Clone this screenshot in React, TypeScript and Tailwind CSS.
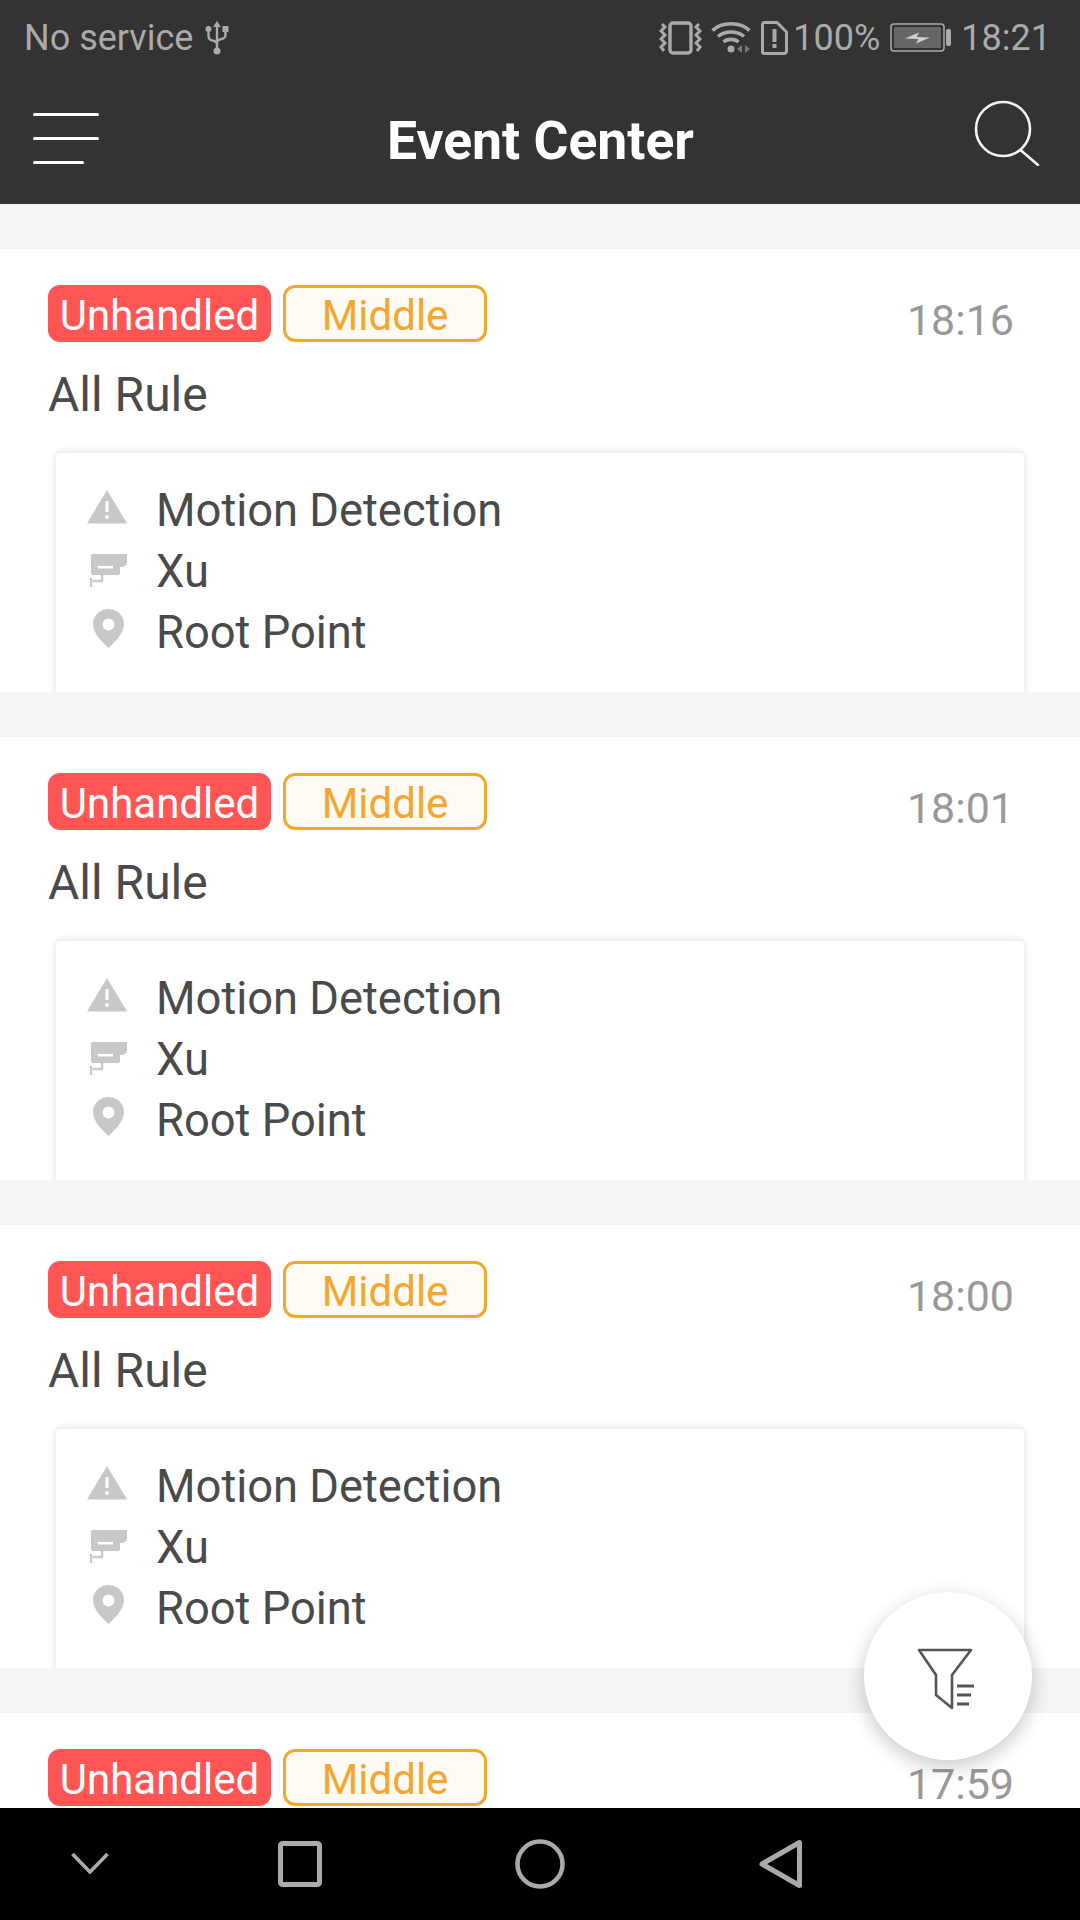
import React from "react";

const events = ["18:16", "18:01", "18:00", "17:59"];

function Vibrate() {
  return (
    <svg width="43" height="34" viewBox="0 0 43 34" fill="none" stroke="#aaaaaa">
      <rect x="11" y="2" width="21" height="30" rx="3" strokeWidth="3.400" />
      <path d="M3 3l3 3-4 4 4 4-4 4 4 4-4 4 3 4M40 3l-3 3 4 4-4 4 4 4-4 4 4 4-3 4" strokeWidth="3" />
    </svg>
  );
}

function Wifi() {
  return (
    <svg width="40" height="33" viewBox="0 0 40 33" fill="none" stroke="#aaaaaa" strokeWidth="3.600">
      <path d="M1.5 9.5C11 .5 29 .5 38.5 9.5M7 15.5c7-6 19-6 26 0M12.5 21c4-3.500 11-3.500 15 0" />
      <circle cx="20" cy="28" r="3.500" fill="#aaaaaa" stroke="none" />
      <path d="M31 24v8l-5-4zM34 24v8l5-4z" fill="#777777" stroke="none" />
    </svg>
  );
}

function SimAlert() {
  return (
    <svg width="27" height="34" viewBox="0 0 27 34" fill="none">
      <path d="M3.500 1.500H16l9.500 9.500v19a2.500 2.500 0 0 1-2.500 2.500H3.500A2 2 0 0 1 1.500 30.500v-27a2 2 0 0 1 2-2z" stroke="#aaaaaa" strokeWidth="3" />
      <rect x="11.500" y="8" width="4" height="13" fill="#aaaaaa" />
      <rect x="11.500" y="23" width="4" height="4" fill="#aaaaaa" />
    </svg>
  );
}

function Battery() {
  return (
    <svg width="61" height="29" viewBox="0 0 61 29" fill="none">
      <rect x="1" y="1" width="53" height="27" rx="3" stroke="#aaaaaa" strokeWidth="1.500" />
      <rect x="4" y="4" width="47" height="21" rx="1.500" fill="#666666" />
      <rect x="56" y="6" width="5" height="17" rx="2" fill="#aaaaaa" />
      <path d="M15 15.500L29 9.500l-2.500 4.500L40 14.500 26 20.500l2.500-4.500z" fill="#d0d0d0" />
    </svg>
  );
}

function Usb() {
  return (
    <svg width="24" height="34" viewBox="0 0 24 34" fill="none" stroke="#aaaaaa" strokeWidth="2.400">
      <path d="M12 5v24M3.500 9v6c0 3 1.500 4 4 4.500 3 .5 4.500 1.500 4.500 4M20.500 9v4.500c0 3-1.500 4-4 4.500-3 .5-4.500 1.500-4.500 4" />
      <path d="M12 0l-4 6h8z" fill="#aaaaaa" stroke="none" />
      <circle cx="12" cy="30" r="3.500" fill="#aaaaaa" stroke="none" />
      <circle cx="3.500" cy="8" r="3" fill="#aaaaaa" stroke="none" />
      <rect x="17.500" y="5" width="6" height="6" fill="#aaaaaa" stroke="none" />
    </svg>
  );
}

function StatusBar() {
  return (
    <div className="h-[66px] pl-[24px] pr-[29px] pt-[9px] flex items-center text-[36px] text-[#aaaaaa] leading-none">
      <span>No service</span>
      <span className="ml-[12px] flex"><Usb /></span>
      <span className="ml-auto flex"><Vibrate /></span>
      <span className="ml-[9px] flex"><Wifi /></span>
      <span className="ml-[10px] flex"><SimAlert /></span>
      <span className="ml-[5px]">100%</span>
      <span className="ml-[10px] flex"><Battery /></span>
      <span className="ml-[10px]">18:21</span>
    </div>
  );
}

function Toolbar() {
  return (
    <div className="h-[138px] pl-[33px] pr-[40px] pb-[4px] flex items-center justify-between">
      <div className="flex flex-col items-start gap-[21px] w-[66px] mt-[10px]">
        <div className="h-[3px] w-[66px] bg-white rounded-full" />
        <div className="h-[3px] w-[66px] bg-white rounded-full" />
        <div className="h-[3px] w-[51px] bg-white rounded-full" />
      </div>
      <div className="text-white font-bold text-[53.500px] leading-none mt-[16px] ml-[8px]">Event Center</div>
      <svg width="66" height="66" viewBox="0 0 66 66" fill="none" stroke="#f4f4f4" strokeWidth="2.600" strokeLinecap="round">
        <circle cx="29" cy="29" r="27" />
        <path d="M46.500 50L64 65" />
      </svg>
    </div>
  );
}

function AlertIcon() {
  return (
    <svg width="40" height="34" viewBox="0 0 40 34">
      <path d="M20 0L40 33.500H0z" fill="#c8c8c8" />
      <rect x="18.500" y="11" width="3" height="11" rx="1" fill="#ffffff" />
      <circle cx="20" cy="27" r="2" fill="#ffffff" />
    </svg>
  );
}

function CameraIcon() {
  return (
    <svg width="37" height="34" viewBox="0 0 37 34">
      <path d="M2 0h35v8a5 5 0 0 1-5 5h-2v6a2 2 0 0 1-2 2H3a2 2 0 0 1-2-2V1z" fill="#c8c8c8" />
      <rect x="8" y="12" width="15" height="2.500" fill="#ffffff" />
      <path d="M12 21v6H3M1 24v9" fill="none" stroke="#c8c8c8" strokeWidth="2.500" />
    </svg>
  );
}

function PinIcon() {
  return (
    <svg width="31" height="39" viewBox="0 0 31 39">
      <path fillRule="evenodd" d="M15.500 0C24 0 31 6.500 31 15c0 9-9 18-15.500 24C9 33 0 24 0 15 0 6.500 7 0 15.500 0zm0 9.500a6 6 0 1 0 0 12 6 6 0 0 0 0-12z" fill="#c8c8c8" />
    </svg>
  );
}

function Row({ icon, text, iconPad }: { icon: React.ReactNode; text: string; iconPad: string }) {
  return (
    <div className="h-[61px] flex items-center">
      <div className={`w-[69px] flex ${iconPad}`}>{icon}</div>
      <span>{text}</span>
    </div>
  );
}

function EventCard({ time }: { time: string }) {
  return (
    <div className="h-[443px] shrink-0 bg-white overflow-hidden pt-[36px]">
      <div className="pl-[48px] pr-[66px] flex items-start justify-between">
        <div className="flex gap-[12px]">
          <div className="h-[57px] w-[223px] rounded-[12px] bg-[#ff5555] text-white text-[42px] pt-[3px] flex items-center justify-center">Unhandled</div>
          <div className="h-[57px] w-[204px] rounded-[12px] border-[3px] border-[#f0a830] bg-[#fffaf4] text-[#f0a830] text-[42px] pt-[3px] flex items-center justify-center">Middle</div>
        </div>
        <div className="text-[43px] leading-none text-[#999999] mt-[14px]">{time}</div>
      </div>
      <div className="pl-[48px] mt-[26px] text-[48px] leading-[54px] text-[#4a4a4a]">All Rule</div>
      <div className="ml-[56px] mr-[56px] mt-[31px] h-[260px] rounded-[4px] bg-white shadow-[0_0_8px_rgba(0,0,0,0.14)] pt-[27px] pl-[31px] text-[45.300px] text-[#4a4a4a]">
        <Row icon={<AlertIcon />} text="Motion Detection" iconPad="pl-0 mb-[8px]" />
        <Row icon={<CameraIcon />} text="Xu" iconPad="pl-[3px] mb-[1px]" />
        <Row icon={<PinIcon />} text="Root Point" iconPad="pl-[6px] mb-[8px]" />
      </div>
    </div>
  );
}

function FilterIcon() {
  return (
    <svg width="60" height="62" viewBox="0 0 60 62" fill="none" stroke="#555555" strokeWidth="2.600" strokeLinejoin="round">
      <path d="M2 2h52L35 27v33L19 47V27z" />
      <path d="M40 38h17M40 47h14M40 56h12" strokeWidth="3" />
    </svg>
  );
}

function NavBar() {
  return (
    <div className="h-[112px] shrink-0 bg-black pl-[71px] flex items-center">
      <svg width="38" height="22" viewBox="0 0 38 22" fill="none" stroke="#aaaaaa" strokeWidth="3.600" className="mt-[-3px]">
        <path d="M1.500 2L19 20 36.500 2" />
      </svg>
      <svg width="44" height="46" viewBox="0 0 44 46" fill="none" stroke="#aaaaaa" strokeWidth="5" className="ml-[169px]">
        <rect x="2.500" y="2.500" width="39" height="41" rx="2" />
      </svg>
      <svg width="50" height="50" viewBox="0 0 50 50" fill="none" stroke="#aaaaaa" strokeWidth="4.500" className="ml-[193px]">
        <circle cx="25" cy="25" r="22.500" />
      </svg>
      <svg width="44" height="50" viewBox="0 0 44 50" fill="none" stroke="#aaaaaa" strokeWidth="5" strokeLinejoin="round" className="ml-[194px]">
        <path d="M40.500 3.500v43L3 25z" />
      </svg>
    </div>
  );
}

export default function App() {
  return (
    <div className="relative w-[1080px] h-[1920px] overflow-hidden flex flex-col bg-[#f5f5f5] font-['Roboto',sans-serif]">
      <div className="h-[204px] shrink-0 bg-[#333333]">
        <StatusBar />
        <Toolbar />
      </div>
      <div className="flex-1 overflow-hidden pt-[45px] flex flex-col gap-[45px]">
        {events.map((t) => (
          <EventCard key={t} time={t} />
        ))}
      </div>
      <NavBar />
      <div className="absolute left-[864px] top-[1592px] w-[168px] h-[168px] rounded-full bg-white shadow-[0_6px_20px_rgba(0,0,0,0.22)] flex items-center justify-center pt-[6px] pr-[3px]">
        <FilterIcon />
      </div>
    </div>
  );
}
